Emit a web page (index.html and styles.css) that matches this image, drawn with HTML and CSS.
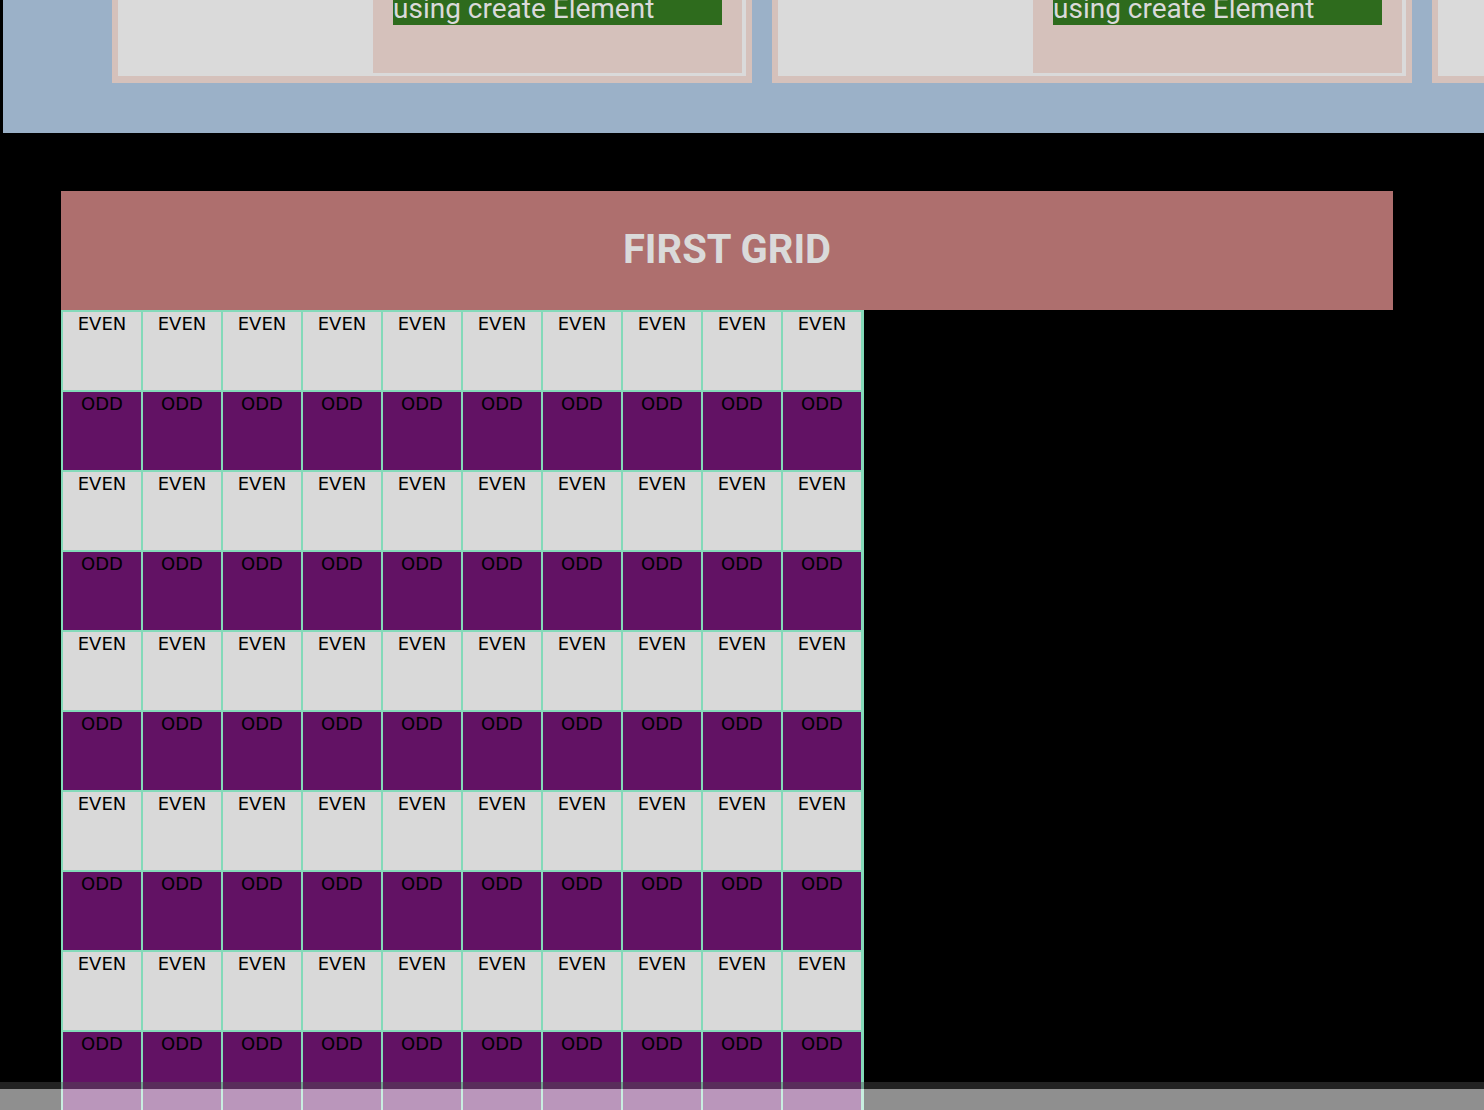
FILE: index.html
```html
<!DOCTYPE html>
<html lang="en">
<head>
<meta charset="utf-8">
<title>Grid</title>
<link rel="stylesheet" href="styles.css">
</head>
<body>
<section class="top">
  <div class="card">
    <div class="card-inner">
      <div class="card-left"></div>
      <div class="card-right"><div class="label">using create Element</div></div>
    </div>
  </div>
  <div class="card">
    <div class="card-inner">
      <div class="card-left"></div>
      <div class="card-right"><div class="label">using create Element</div></div>
    </div>
  </div>
  <div class="card">
    <div class="card-inner">
      <div class="card-left"></div>
      <div class="card-right"><div class="label">using create Element</div></div>
    </div>
  </div>
</section>

<h1 class="grid-title">FIRST GRID</h1>
<div class="grid">
  <div class="cell even">EVEN</div><div class="cell even">EVEN</div><div class="cell even">EVEN</div><div class="cell even">EVEN</div><div class="cell even">EVEN</div><div class="cell even">EVEN</div><div class="cell even">EVEN</div><div class="cell even">EVEN</div><div class="cell even">EVEN</div><div class="cell even">EVEN</div>
  <div class="cell odd">ODD</div><div class="cell odd">ODD</div><div class="cell odd">ODD</div><div class="cell odd">ODD</div><div class="cell odd">ODD</div><div class="cell odd">ODD</div><div class="cell odd">ODD</div><div class="cell odd">ODD</div><div class="cell odd">ODD</div><div class="cell odd">ODD</div>
  <div class="cell even">EVEN</div><div class="cell even">EVEN</div><div class="cell even">EVEN</div><div class="cell even">EVEN</div><div class="cell even">EVEN</div><div class="cell even">EVEN</div><div class="cell even">EVEN</div><div class="cell even">EVEN</div><div class="cell even">EVEN</div><div class="cell even">EVEN</div>
  <div class="cell odd">ODD</div><div class="cell odd">ODD</div><div class="cell odd">ODD</div><div class="cell odd">ODD</div><div class="cell odd">ODD</div><div class="cell odd">ODD</div><div class="cell odd">ODD</div><div class="cell odd">ODD</div><div class="cell odd">ODD</div><div class="cell odd">ODD</div>
  <div class="cell even">EVEN</div><div class="cell even">EVEN</div><div class="cell even">EVEN</div><div class="cell even">EVEN</div><div class="cell even">EVEN</div><div class="cell even">EVEN</div><div class="cell even">EVEN</div><div class="cell even">EVEN</div><div class="cell even">EVEN</div><div class="cell even">EVEN</div>
  <div class="cell odd">ODD</div><div class="cell odd">ODD</div><div class="cell odd">ODD</div><div class="cell odd">ODD</div><div class="cell odd">ODD</div><div class="cell odd">ODD</div><div class="cell odd">ODD</div><div class="cell odd">ODD</div><div class="cell odd">ODD</div><div class="cell odd">ODD</div>
  <div class="cell even">EVEN</div><div class="cell even">EVEN</div><div class="cell even">EVEN</div><div class="cell even">EVEN</div><div class="cell even">EVEN</div><div class="cell even">EVEN</div><div class="cell even">EVEN</div><div class="cell even">EVEN</div><div class="cell even">EVEN</div><div class="cell even">EVEN</div>
  <div class="cell odd">ODD</div><div class="cell odd">ODD</div><div class="cell odd">ODD</div><div class="cell odd">ODD</div><div class="cell odd">ODD</div><div class="cell odd">ODD</div><div class="cell odd">ODD</div><div class="cell odd">ODD</div><div class="cell odd">ODD</div><div class="cell odd">ODD</div>
  <div class="cell even">EVEN</div><div class="cell even">EVEN</div><div class="cell even">EVEN</div><div class="cell even">EVEN</div><div class="cell even">EVEN</div><div class="cell even">EVEN</div><div class="cell even">EVEN</div><div class="cell even">EVEN</div><div class="cell even">EVEN</div><div class="cell even">EVEN</div>
  <div class="cell odd">ODD</div><div class="cell odd">ODD</div><div class="cell odd">ODD</div><div class="cell odd">ODD</div><div class="cell odd">ODD</div><div class="cell odd">ODD</div><div class="cell odd">ODD</div><div class="cell odd">ODD</div><div class="cell odd">ODD</div><div class="cell odd">ODD</div>
  <div class="cell even">EVEN</div><div class="cell even">EVEN</div><div class="cell even">EVEN</div><div class="cell even">EVEN</div><div class="cell even">EVEN</div><div class="cell even">EVEN</div><div class="cell even">EVEN</div><div class="cell even">EVEN</div><div class="cell even">EVEN</div><div class="cell even">EVEN</div>
  <div class="cell odd">ODD</div><div class="cell odd">ODD</div><div class="cell odd">ODD</div><div class="cell odd">ODD</div><div class="cell odd">ODD</div><div class="cell odd">ODD</div><div class="cell odd">ODD</div><div class="cell odd">ODD</div><div class="cell odd">ODD</div><div class="cell odd">ODD</div>
</div>

<div class="hscroll">
  <div class="hscroll-edge"></div>
  <div class="hscroll-track"></div>
</div>
</body>
</html>
```

FILE: styles.css
```css
html, body {
  margin: 0;
  padding: 0;
  overflow: hidden;
  height: 100%;
}

body {
  background: #000;
  font-family: "DejaVu Sans", sans-serif;
}

.top {
  box-sizing: border-box;
  margin-left: 3px;
  height: 133px;
  background: #9bb1c8;
  display: flex;
  align-items: flex-end;
  gap: 20px;
  padding: 0 0 50px 109px;
  overflow: hidden;
}

.card {
  flex: 0 0 auto;
  box-sizing: border-box;
  width: 640px;
  height: 160px;
  background: #d5c1bb;
  padding: 6px 6px 7px 6px;
  display: flex;
}

.card-inner {
  flex: 1;
  display: flex;
  background: #dadada;
  padding: 0 4px 3px 0;
}

.card-left {
  width: 255px;
  flex: 0 0 auto;
}

.card-right {
  flex: 1;
  background: #d5c1bb;
  padding: 0 20px 48px 20px;
  display: flex;
  flex-direction: column;
  justify-content: flex-end;
}

.label {
  background: #2e6b1d;
  color: #dadada;
  font-family: Roboto, "Liberation Sans", sans-serif;
  font-size: 28px;
  line-height: normal;
  white-space: nowrap;
}

.grid-title {
  box-sizing: border-box;
  margin: 58px 0 0 61px;
  width: 1332px;
  padding: 35px 0 37px;
  background: #ae6f6e;
  color: #dadada;
  font-family: Roboto, "Liberation Sans", sans-serif;
  font-weight: 700;
  font-size: 40px;
  line-height: normal;
  text-align: center;
}

.grid {
  display: grid;
  grid-template-columns: repeat(10, 80px);
  grid-auto-rows: 80px;
  width: max-content;
  margin-left: 61px;
  border-left: 1px solid #84d9b9;
  border-top: 1px solid #84d9b9;
  border-right: 2px solid #84d9b9;
}

.cell {
  box-sizing: border-box;
  border: 1px solid #84d9b9;
  padding-top: 1px;
  text-align: center;
  font-size: 18px;
  line-height: normal;
  color: #000;
}

.even {
  background: #d9d9d9;
}

.odd {
  background: #621264;
}

.hscroll {
  position: fixed;
  left: 0;
  right: 0;
  bottom: 0;
}

.hscroll-edge {
  height: 7px;
  background: rgba(79, 79, 79, 0.43);
}

.hscroll-track {
  height: 21px;
  background: rgba(255, 255, 255, 0.56);
}
```
